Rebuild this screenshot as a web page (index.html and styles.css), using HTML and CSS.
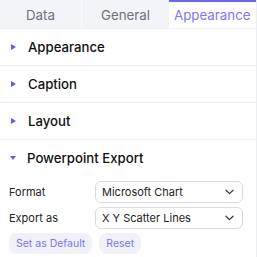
FILE: index.html
```html
<!DOCTYPE html>
<html>
<head>
<meta charset="utf-8">
<link rel="stylesheet" href="styles.css">
</head>
<body>
<div class="panel">
  <div class="tabs">
    <div class="tab tab-data">Data</div>
    <div class="tab tab-general">General</div>
    <div class="tab active">Appearance</div>
  </div>
  <div class="section">
    <span class="tri right"></span><span class="title">Appearance</span>
  </div>
  <div class="section">
    <span class="tri right"></span><span class="title">Caption</span>
  </div>
  <div class="section">
    <span class="tri right"></span><span class="title">Layout</span>
  </div>
  <div class="section open">
    <span class="tri down"></span><span class="title">Powerpoint Export</span>
  </div>
  <div class="form">
    <div class="row">
      <label class="label">Format</label>
      <div class="select"><span>Microsoft Chart</span>
        <svg class="chev" width="9" height="6" viewBox="0 0 9 6"><path d="M1 1.2 L4.5 4.6 L8 1.2" fill="none" stroke="#3a3a44" stroke-width="1.3" stroke-linecap="round" stroke-linejoin="round"/></svg>
      </div>
    </div>
    <div class="row">
      <label class="label">Export as</label>
      <div class="select"><span>X Y Scatter Lines</span>
        <svg class="chev" width="9" height="6" viewBox="0 0 9 6"><path d="M1 1.2 L4.5 4.6 L8 1.2" fill="none" stroke="#3a3a44" stroke-width="1.3" stroke-linecap="round" stroke-linejoin="round"/></svg>
      </div>
    </div>
    <div class="buttons">
      <button class="btn btn-default">Set as Default</button>
      <button class="btn btn-reset">Reset</button>
    </div>
  </div>
</div>
</body>
</html>
```
FILE: styles.css
```css
html, body {
  margin: 0;
  padding: 0;
  background: #ffffff;
}
body {
  font-family: Inter, "Noto Sans", sans-serif;
  width: 257px;
  height: 257px;
  overflow: hidden;
}
.panel {
  width: 256px;
  height: 257px;
  border-right: 1px solid #eceef4;
}
.tabs {
  display: grid;
  grid-template-columns: 82px 87px 1fr;
  height: 29px;
  background: #f3f4f8;
  border-bottom: 1px solid #f0f1f6;
  box-sizing: border-box;
}
.tab {
  display: flex;
  align-items: center;
  justify-content: center;
  font-size: 13.3px;
  color: #707177;
  box-sizing: border-box;
  padding-top: 1px;
}
.tab-data {
  border-right: 1px solid #fbfbfd;
}
.active {
  background: #ffffff;
  color: #7f76f2;
  border-top: 2px solid #6a66f4;
  padding-top: 0;
  padding-left: 5px;
  justify-content: flex-start;
}
.section {
  height: 37px;
  display: flex;
  align-items: center;
  border-bottom: 1px solid #eff0f6;
  box-sizing: border-box;
}
.section.open {
  border-bottom: none;
  height: 36px;
}
.tri {
  width: 0;
  height: 0;
  margin-left: 11px;
  margin-right: 12px;
}
.tri.right {
  border-top: 3.5px solid transparent;
  border-bottom: 3.5px solid transparent;
  border-left: 5px solid #5f5cf0;
  margin-right: 12px;
}
.tri.down {
  border-left: 3.5px solid transparent;
  border-right: 3.5px solid transparent;
  border-top: 4px solid #5f5cf0;
  margin-left: 10px;
  margin-right: 11px;
}
.title {
  font-size: 13.2px;
  font-weight: 500;
  color: #111111;
}
.form {
  padding: 5px 13px 0 9px;
  display: flex;
  flex-direction: column;
  gap: 4px;
}
.row {
  display: flex;
  align-items: center;
}
.label {
  width: 86px;
  font-size: 11px;
  color: #222227;
}
.select {
  flex: 1;
  height: 22px;
  box-sizing: border-box;
  border: 1px solid #d9dbe4;
  border-radius: 6px;
  display: flex;
  align-items: center;
  justify-content: space-between;
  padding: 0 8px 0 6px;
  font-size: 11px;
  color: #1d1d22;
}
.chev {
  display: block;
}
.buttons {
  display: flex;
  gap: 7px;
}
.btn {
  font-family: Inter, "Noto Sans", sans-serif;
  font-size: 10.5px;
  color: #7d74ee;
  background: #f1f2f9;
  border: none;
  border-radius: 8px;
  height: 21px;
  padding: 0 7px;
  cursor: pointer;
}
```
